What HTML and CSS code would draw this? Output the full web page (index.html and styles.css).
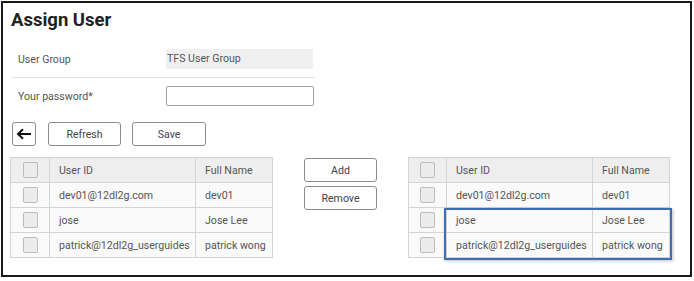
FILE: index.html
```html
<!DOCTYPE html>
<html lang="en">
<head>
    <meta charset="UTF-8">
    <title>Assign User</title>
    <link rel="stylesheet" href="styles.css">
</head>
<body>
    <div class="frame">
        <h1>Assign User</h1>

        <div class="form">
            <div class="form-row">
                <label>User Group</label>
                <div class="readonly">TFS User Group</div>
            </div>
            <div class="form-row">
                <label>Your password*</label>
                <input class="text-input" type="password">
            </div>
        </div>

        <div class="toolbar">
            <button class="btn btn-back" title="Back">
                <svg width="16" height="12" viewBox="0 0 16 12">
                    <path d="M15 6H2.5M7 1.2L2 6l5 4.8" fill="none" stroke="#111" stroke-width="2"/>
                </svg>
            </button>
            <button class="btn btn-refresh">Refresh</button>
            <button class="btn btn-save">Save</button>
        </div>

        <div class="lists">
            <table class="grid">
                <thead>
                    <tr><th class="col-check"><span class="check"></span></th><th class="col-id">User ID</th><th class="col-name">Full Name</th></tr>
                </thead>
                <tbody>
                    <tr><td class="col-check"><span class="check"></span></td><td>dev01@12dl2g.com</td><td>dev01</td></tr>
                    <tr><td class="col-check"><span class="check"></span></td><td>jose</td><td>Jose Lee</td></tr>
                    <tr><td class="col-check"><span class="check"></span></td><td>patrick@12dl2g_userguides</td><td>patrick wong</td></tr>
                </tbody>
            </table>

            <div class="move-buttons">
                <button class="btn btn-move">Add</button>
                <button class="btn btn-move">Remove</button>
            </div>

            <div class="grid-wrap">
                <table class="grid grid-right">
                    <thead>
                        <tr><th class="col-check"><span class="check"></span></th><th class="col-id">User ID</th><th class="col-name">Full Name</th></tr>
                    </thead>
                    <tbody>
                        <tr><td class="col-check"><span class="check"></span></td><td>dev01@12dl2g.com</td><td>dev01</td></tr>
                        <tr><td class="col-check"><span class="check"></span></td><td>jose</td><td>Jose Lee</td></tr>
                        <tr><td class="col-check"><span class="check"></span></td><td>patrick@12dl2g_userguides</td><td>patrick wong</td></tr>
                    </tbody>
                </table>
                <div class="highlight"></div>
            </div>
        </div>
    </div>
</body>
</html>
```

FILE: styles.css
```css
* {
    margin: 0;
    padding: 0;
    box-sizing: border-box;
}

body {
    font-family: Roboto, "Liberation Sans", sans-serif;
    font-size: 10.6px;
    color: #555;
    background: #fff;
}

.frame {
    margin: 1px 0 0 1px;
    width: 691px;
    height: 276px;
    border: 2px solid #1a1a1a;
    padding: 0 0 0 7px;
}

h1 {
    font-size: 18.5px;
    line-height: 24px;
    font-weight: 700;
    color: #222;
    margin: 5px 0 9px 1px;
}

.form {
    width: 303px;
    margin-left: 2px;
}

.form-row {
    display: flex;
    align-items: center;
    padding: 8px 0;
}

.form-row:first-child {
    border-bottom: 1px solid #e2e2e2;
}

.form-row label {
    width: 154px;
    padding-left: 6px;
    color: #555;
}

.readonly {
    width: 147px;
    height: 20px;
    line-height: 20px;
    padding-left: 1px;
    background: #f0f0f0;
    color: #555;
}

.text-input {
    width: 148px;
    height: 20px;
    border: 1px solid #a0a0a0;
    border-radius: 2px;
    background: #fff;
}

.toolbar {
    display: flex;
    margin: 8px 0 0 2px;
}

.btn {
    height: 24px;
    border: 1px solid #8c8c8c;
    border-radius: 3px;
    background: #fff;
    font-family: inherit;
    font-size: 10.6px;
    color: #444;
    cursor: pointer;
}

.btn-back {
    width: 24px;
    display: flex;
    align-items: center;
    justify-content: center;
}

.btn-refresh {
    width: 73px;
    margin-left: 12px;
}

.btn-save {
    width: 74px;
    margin-left: 11px;
}

.lists {
    display: flex;
    align-items: flex-start;
    margin-top: 11px;
}

.grid {
    border-collapse: collapse;
    width: 263px;
    table-layout: fixed;
}

.grid th,
.grid td {
    border: 1px solid #d4d4d4;
    height: 25px;
    padding: 0 9px;
    text-align: left;
    font-weight: 400;
    white-space: nowrap;
    overflow: hidden;
}

.grid th {
    background: #eeeeee;
}

.grid td {
    background: #fafafa;
}

.grid .col-check {
    width: 39px;
    padding: 0;
    text-align: center;
}

.grid .col-id {
    width: 146px;
}

.check {
    display: inline-block;
    width: 15px;
    height: 16px;
    vertical-align: middle;
    border: 1px solid #bcbcbc;
    border-radius: 2px;
    background: #ececec;
}

.move-buttons {
    display: flex;
    flex-direction: column;
    gap: 4px;
    margin: 1px 0 0 31px;
}

.btn-move {
    width: 73px;
}

.grid-wrap {
    position: relative;
    margin-left: 31px;
}

.grid-right {
    width: 262px;
}

.grid-right .col-check {
    width: 38px;
}

.highlight {
    position: absolute;
    left: 36px;
    top: 51px;
    width: 228px;
    height: 52px;
    border: 2px solid #3d6fae;
    box-shadow: 1px 1px 3px rgba(0, 0, 0, 0.25);
}
```
